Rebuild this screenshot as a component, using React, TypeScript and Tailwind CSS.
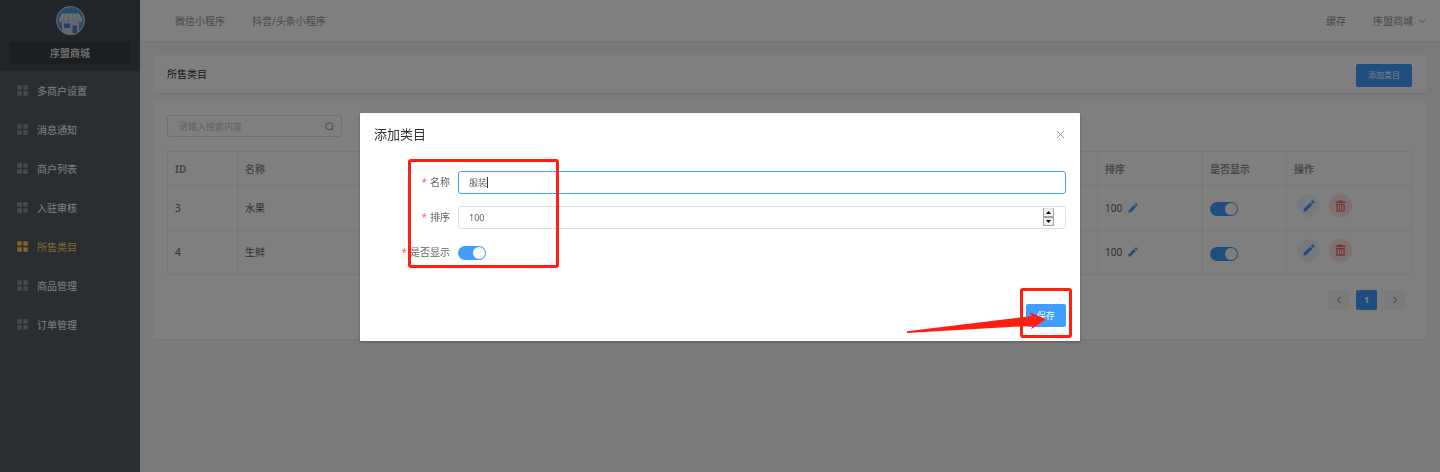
import React, { useState } from 'react';

const menuItems = ['多商户设置', '消息通知', '商户列表', '入驻审核', '所售类目', '商品管理', '订单管理'];

const initialRows = [
  { id: 3, name: '水果', sort: 100, visible: true },
  { id: 4, name: '生鲜', sort: 100, visible: true },
];

const GridIcon: React.FC = () => (
  <svg viewBox="0 0 11 11" className="size-[11px] shrink-0" fill="currentColor" aria-hidden="true">
    <path d="M0.300 0.300h4.400v4.400H0.300zM6.300 0.300h4.400v4.400H6.300zM0.300 6.300h4.400v4.400H0.300zM6.300 6.300h4.400v4.400H6.300z" />
  </svg>
);

const PencilIcon: React.FC<{ className: string }> = ({ className }) => (
  <svg viewBox="0 0 12 12" className={className} fill="currentColor" aria-hidden="true">
    <path d="M0.3 11.7 1 8.6 7.2 2.4 9.6 4.8 3.4 11z" />
    <path d="M7.9 1.7 9 0.6c.4-.4.9-.4 1.3 0l1.1 1.1c.4.4.4.9 0 1.3L10.3 4.1z" />
  </svg>
);

const TrashIcon: React.FC = () => (
  <svg viewBox="0 0 11 12" className="h-3 w-[11px]" aria-hidden="true">
    <path d="M0.500 1.500h3V0.400h4v1.100h3v1.800h-10z" fill="currentColor" />
    <path d="M1.900 4.600h7.200v6.600H1.900z" fill="none" stroke="currentColor" strokeWidth="1.300" />
    <path d="M4.400 5v6M6.600 5v6" fill="none" stroke="currentColor" strokeWidth="0.900" />
  </svg>
);

const ShopLogo: React.FC = () => (
  <svg viewBox="0 0 29 29" className="size-[29px]" aria-hidden="true">
    <circle cx="14.5" cy="14.5" r="14" fill="#5296dc" stroke="#d4dce4" strokeWidth="1" />
    <path d="M6 15h17v11.200a14 14 0 0 1-17 0z" fill="#c8d0dc" />
    <path d="M6 7.500h17l3.500 6.500h-24z" fill="#d8dde6" />
    <path d="M9 8 7 14.500M13 8l-1 6.500M16.500 8l.8 6.500M20 8l2 6.500" stroke="#a9bcd8" strokeWidth="1" />
    <path d="M2.500 14a2.400 2 0 0 0 4.800 0 2.400 2 0 0 0 4.800 0 2.400 2 0 0 0 4.800 0 2.400 2 0 0 0 4.800 0 2.400 2 0 0 0 4.800 0z" fill="#c8d0dc" />
    <path d="M8 17.500h6v4.500H8zM16.500 19.500h4.500v7.500h-4.500z" fill="#3f80ca" />
  </svg>
);

const Switch: React.FC<{ label: string; id?: string; defaultChecked?: boolean }> = ({ label, id, defaultChecked }) => (
  <input
    id={id}
    type="checkbox"
    role="switch"
    aria-label={label}
    defaultChecked={defaultChecked}
    className="block h-3.5 w-7 appearance-none rounded-full bg-[#dcdfe6] before:m-px before:block before:size-3 before:rounded-full before:bg-white checked:bg-[#409eff] checked:before:ml-[15px]"
  />
);

const Sidebar: React.FC = () => {
  const [active, setActive] = useState('所售类目');

  return (
    <aside className="w-[140px] shrink-0 bg-[#545c64]">
      <div className="flex h-[71px] flex-col items-center bg-[#434a50] px-2.5 pt-1.5">
        <ShopLogo />
        <div className="mt-[7px] h-[22px] w-full rounded-xs bg-[#393f42] text-center font-bold leading-[22px] text-[#dadada]">
          序盟商城
        </div>
      </div>
      <nav>
        {menuItems.map((item) => (
          <a
            key={item}
            href="#"
            onClick={() => setActive(item)}
            className={`flex h-[39px] items-center gap-[9px] pl-[17px] ${active === item ? 'text-[#ffd04b]' : 'text-white'}`}
          >
            <span className={active === item ? 'text-[#ffd04b]' : 'text-[#909399]'}>
              <GridIcon />
            </span>
            <span className="pt-px">{item}</span>
          </a>
        ))}
      </nav>
    </aside>
  );
};

const Header: React.FC = () => (
  <header className="flex h-[41px] items-center justify-between bg-white pl-[35px] pr-3.5 text-[#909399] shadow-xs">
    <nav className="flex gap-[27px]">
      <a href="#">微信小程序</a>
      <a href="#">抖音/头条小程序</a>
    </nav>
    <div className="flex items-center gap-[27px]">
      <button type="button">缓存</button>
      <button type="button" className="flex items-center gap-[5px]">
        序盟商城
        <svg viewBox="0 0 8 8" className="size-2" fill="none" stroke="currentColor" aria-hidden="true">
          <path d="M1 2.500 4 5.500 7 2.500" />
        </svg>
      </button>
    </div>
  </header>
);

const CategoryTable: React.FC = () => (
  <table className="w-full table-fixed border-collapse text-left text-[#606266]">
    <thead className="text-[#909399]">
      <tr className="h-[34px]">
        <th className="w-[70px] border border-[#ebeef5] px-[7px]">ID</th>
        <th className="border border-[#ebeef5] px-[7px]">名称</th>
        <th className="w-[105px] border border-[#ebeef5] px-[7px]">排序</th>
        <th className="w-[84px] border border-[#ebeef5] px-[7px]">是否显示</th>
        <th className="w-[125px] border border-[#ebeef5] px-[7px]">操作</th>
      </tr>
    </thead>
    <tbody>
      {initialRows.map((row) => (
        <tr key={row.id} className="h-[45px] last:h-11">
          <td className="border border-[#ebeef5] px-[7px] pb-px">{row.id}</td>
          <td className="border border-[#ebeef5] px-[7px] pb-px">{row.name}</td>
          <td className="border border-[#ebeef5] px-[7px] pb-px">
            <div className="flex items-center gap-1.5">
              {row.sort}
              <button type="button" aria-label="修改排序" className="text-[#409eff]">
                <PencilIcon className="size-2.5" />
              </button>
            </div>
          </td>
          <td className="border border-[#ebeef5] px-[7px] pt-0.5">
            <Switch label="是否显示" defaultChecked={row.visible} />
          </td>
          <td className="border border-[#ebeef5] px-2.5 pb-[5px]">
            <div className="flex gap-[9px]">
              <button type="button" aria-label="编辑" className="grid size-[23px] place-items-center rounded-full bg-[#ecf5ff] text-[#409eff]">
                <PencilIcon className="size-3" />
              </button>
              <button type="button" aria-label="删除" className="grid size-[23px] place-items-center rounded-full bg-[#fde2e2] text-[#f56c6c]">
                <TrashIcon />
              </button>
            </div>
          </td>
        </tr>
      ))}
    </tbody>
  </table>
);

const Pagination: React.FC = () => (
  <div className="flex justify-end gap-[7px] pr-[7px] text-[9px]">
    <button type="button" aria-label="上一页" className="grid h-5 w-[21px] place-items-center rounded-xs bg-[#f4f4f5] text-[#a8abb2]">
      <svg viewBox="0 0 8 8" className="size-2" fill="none" stroke="currentColor" strokeWidth="1.300">
        <path d="M5.500 1 2.500 4l3 3" />
      </svg>
    </button>
    <button type="button" className="h-5 w-[21px] rounded-xs bg-[#409eff] font-bold text-white">1</button>
    <button type="button" aria-label="下一页" className="grid h-5 w-[21px] place-items-center rounded-xs bg-[#f4f4f5] text-[#a8abb2]">
      <svg viewBox="0 0 8 8" className="size-2" fill="none" stroke="currentColor" strokeWidth="1.300">
        <path d="M2.500 1l3 3-3 3" />
      </svg>
    </button>
  </div>
);

const CategoryDialog: React.FC = () => {
  const [name, setName] = useState('服装');
  const [sort, setSort] = useState(100);

  return (
    <div className="fixed inset-0 bg-black/50 pt-[113px]">
      <div role="dialog" aria-label="添加类目" className="relative mx-auto w-1/2 rounded-[1px] bg-white px-3.5 pb-3.5 shadow-[0_1px_3px_rgba(0,0,0,0.3)]">
        <div className="flex h-[42px] items-center justify-between">
          <h2 className="text-[13px] text-[#303133]">添加类目</h2>
          <button type="button" aria-label="关闭" className="px-px text-[#909399]">
            <svg viewBox="0 0 9 9" className="size-[9px]" fill="none" stroke="currentColor">
              <path d="M1 1l7 7M8 1 1 8" />
            </svg>
          </button>
        </div>
        <form className="flex flex-col gap-3 pt-4 text-[#606266]">
          <div className="flex items-center gap-2">
            <label htmlFor="name" className="w-[76px] pb-px text-right">
              <span className="mr-[3px] text-[#f56c6c]">*</span>名称
            </label>
            <div className="relative flex-1">
              <input
                id="name"
                value={name}
                onChange={(e) => setName(e.target.value)}
                className="block h-[23px] w-full rounded-[3px] border border-[#409eff] px-2.5 text-[9px] caret-transparent outline-none"
              />
              <span className="absolute left-[29px] top-1.5 h-[11px] w-px bg-[#303133]" />
            </div>
          </div>
          <div className="flex items-center gap-2">
            <label htmlFor="sort" className="w-[76px] pb-px text-right">
              <span className="mr-[3px] text-[#f56c6c]">*</span>排序
            </label>
            <div className="flex h-[23px] flex-1 items-center rounded-[3px] border border-[#dcdfe6] pl-2.5 pr-[11px]">
              <input
                id="sort"
                type="number"
                value={sort}
                onChange={(e) => setSort(Number(e.target.value))}
                className="min-w-0 flex-1 text-[9px] outline-none [appearance:textfield]"
              />
              <div className="flex w-[11px] flex-col pb-0.5">
                <button
                  type="button"
                  aria-label="增加"
                  onClick={() => setSort(sort + 1)}
                  className="grid h-[9px] place-items-center border border-t-[#e3e3e3] border-r-[#a0a0a0] border-b-[#a0a0a0] border-l-[#a0a0a0] bg-[#f0f0f0]"
                >
                  <svg viewBox="0 0 5 3" className="h-[3px] w-[5px]" fill="#000"><path d="M0 3 2.500 0 5 3z" /></svg>
                </button>
                <button
                  type="button"
                  aria-label="减少"
                  onClick={() => setSort(sort - 1)}
                  className="grid h-[9px] place-items-center border border-t-[#a0a0a0] border-r-[#a0a0a0] border-b-[#a0a0a0] border-l-[#a0a0a0] bg-[#f0f0f0]"
                >
                  <svg viewBox="0 0 5 3" className="h-[3px] w-[5px]" fill="#000"><path d="M0 0h5L2.500 3z" /></svg>
                </button>
              </div>
            </div>
          </div>
          <div className="flex h-[23px] items-center gap-2">
            <label htmlFor="visible" className="w-[76px] whitespace-nowrap pb-px text-right">
              <span className="mr-[3px] text-[#f56c6c]">*</span>是否显示
            </label>
            <Switch id="visible" label="是否显示" defaultChecked />
          </div>
        </form>
        <div className="flex justify-end pt-10">
          <button type="button" className="h-[23px] w-10 rounded-xs bg-[#409eff] text-[9px] text-white">保存</button>
        </div>

        {/* tutorial markers */}
        <div className="pointer-events-none absolute left-12 top-[46px] h-[109px] w-[151px] rounded-[3px] border-3 border-[#ff1e10]" />
        <div className="pointer-events-none absolute right-2 top-[175px] h-[50px] w-[52px] rounded-[3px] border-3 border-[#ff1e10]" />
        <svg viewBox="0 0 140 24" className="pointer-events-none absolute right-[33px] top-[198px] h-6 w-[140px]" fill="#ff1e10" aria-hidden="true">
          <path d="M0 20.300 125 5 122.300 1 139 8.300 124 18.300 125.700 14.700 0 21.900z" />
        </svg>
      </div>
    </div>
  );
};

const App: React.FC = () => (
  <div className="flex min-h-screen bg-[#f5f5f5] font-['Noto_Sans','Noto_Sans_CJK_SC',sans-serif] text-[10px] leading-4">
    <Sidebar />
    <div className="min-w-0 flex-1">
      <Header />
      <main className="flex flex-col gap-2 pl-[13px] pr-3.5 pt-3.5">
        <section className="flex h-[38px] items-center justify-between rounded-xs bg-white px-3.5 shadow-xs">
          <h1 className="text-[#303133]">所售类目</h1>
          <button type="button" className="mt-0.5 h-[23px] w-14 rounded-xs bg-[#409eff] text-[8px] text-white">添加类目</button>
        </section>
        <section className="rounded-xs bg-white px-3.5 pb-[29px] pt-3.5 shadow-xs">
          <div className="mb-3.5 flex h-[22px] w-[175px] items-center rounded-[3px] border border-[#dcdfe6] pl-[11px] pr-[7px]">
            <input
              type="search"
              aria-label="搜索"
              placeholder="请输入搜索内容"
              className="min-w-0 flex-1 pt-px text-[9px] outline-none placeholder:text-[#c0c4cc]"
            />
            <svg viewBox="0 0 9 9" className="size-[9px] text-[#909399]" fill="none" stroke="currentColor" aria-hidden="true">
              <circle cx="4.300" cy="4.300" r="3.600" />
              <path d="M6.800 6.800 8.500 8.500" />
            </svg>
          </div>
          <CategoryTable />
          <div className="pt-[15px]">
            <Pagination />
          </div>
        </section>
      </main>
    </div>
    <CategoryDialog />
  </div>
);

export default App;
